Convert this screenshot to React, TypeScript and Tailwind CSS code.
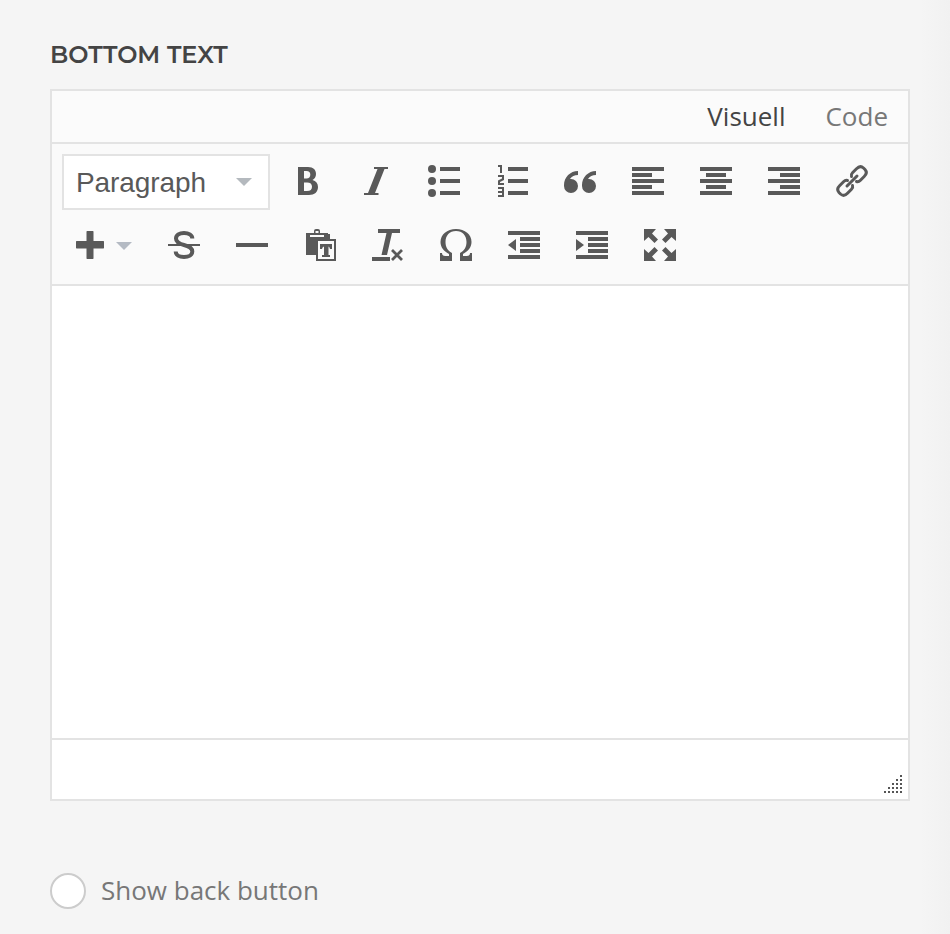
import React from "react";

function Icon({ children, className = "" }: { children: React.ReactNode; className?: string }) {
  return (
    <button className={`flex h-16 w-[68px] items-center justify-center text-[#595959] ${className}`}>
      <svg width="32" height="32" viewBox="0 0 32 32" fill="currentColor" className="overflow-visible">
        {children}
      </svg>
    </button>
  );
}

function Caret({ className }: { className: string }) {
  return (
    <svg width="16" height="8" viewBox="0 0 16 8" className={className} fill="currentColor">
      <path d="M0 0H16L8 8Z" />
    </svg>
  );
}

const RESIZE_ROWS = [1, 2, 3, 4, 5];

export default function App() {
  return (
    <main className="h-[934px] w-[950px] overflow-hidden bg-[linear-gradient(to_right,#f5f5f5_920px,#f1f1f1_950px)] pl-[50px] pt-10 font-['Open_Sans','Noto_Sans',sans-serif]">
      <h2 className="h-[49px] pt-px font-['Montserrat','Inter',sans-serif] text-[24px] font-semibold leading-7 text-[#444444]">
        BOTTOM TEXT
      </h2>

      <section className="flex h-[712px] w-[860px] flex-col border-2 border-[#e3e3e3] bg-white">
        <div className="flex h-[53px] items-center justify-end gap-10 border-b-2 border-[#e3e3e3] bg-[#fbfbfb] pr-5 text-[26px]">
          <button className="text-[#444444]">Visuell</button>
          <button className="text-[#777777]">Code</button>
        </div>

        <div className="h-[142px] border-b-2 border-[#e3e3e3] bg-[#fafafa] pt-[5px]">
          <div className="flex h-16 items-center">
            <button className="ml-2.5 mr-1 mt-0.5 flex h-14 w-52 items-center justify-between border-2 border-[#e3e3e3] bg-white pl-3 pr-4 font-['Liberation_Sans',Arial,sans-serif] text-[28px] tracking-[-0.1px] text-[#595959]">
              <span className="pt-0.5">Paragraph</span>
              <Caret className="text-[#b4b9be]" />
            </button>
            <Icon>
              <path fillRule="evenodd" d="M6 2H16C21.5 2 24 5 24 9C24 12 22.5 14 20.5 15C24 16 26 18.500 26 22C26 27 22.500 30 17 30H6ZM12 6V13.500H14.500C17 13.500 18.300 12 18.300 9.700C18.300 7.300 17 6 14.500 6ZM12 17.500V26H15C18.500 26 20 24.500 20 21.700C20 19 18.300 17.500 15 17.500Z" />
            </Icon>
            <Icon>
              <path d="M14 2H28V4H24.500L15 28H18.500V30H4V28H8L17.500 4H14Z" />
            </Icon>
            <Icon>
              <circle cx="4" cy="4" r="4" />
              <circle cx="4" cy="16" r="4" />
              <circle cx="4" cy="28" r="4" />
              <path d="M12 2H32V6H12ZM12 14H32V18H12ZM12 26H32V30H12Z" />
            </Icon>
            <Icon>
              <path d="M12 2H32V6H12ZM12 14H32V18H12ZM12 26H32V30H12Z" />
              <path d="M2 0H6V8H4V2H2ZM2 10H8V15L4 17V18H8V20H2V15.500L6 13.500V12H2ZM2 22H8V32H2V30H6V28H2V26H6V24H2Z" />
            </Icon>
            <Icon>
              <path d="M7 14A7 7 0 1 1 0 21V20C0 12.300 6.300 6 14 6V10C10.500 10 7.700 11.500 6 14.100ZM25 14A7 7 0 1 1 18 21V20C18 12.300 24.300 6 32 6V10C28.500 10 25.700 11.500 24 14.100Z" />
            </Icon>
            <Icon>
              <path d="M0 2H32V6H0ZM0 8H20V12H0ZM0 14H32V18H0ZM0 20H20V24H0ZM0 26H32V30H0Z" />
            </Icon>
            <Icon>
              <path d="M0 2H32V6H0ZM6 8H26V12H6ZM0 14H32V18H0ZM6 20H26V24H6ZM0 26H32V30H0Z" />
            </Icon>
            <Icon>
              <path d="M0 2H32V6H0ZM12 8H32V12H12ZM0 14H32V18H0ZM12 20H32V24H12ZM0 26H32V30H0Z" />
            </Icon>
            <Icon>
              <g fill="none" stroke="currentColor" strokeWidth="3" strokeLinecap="round">
                <path d="M11 21L21 11" />
                <path d="M15.500 11.500C15 10 15.300 9 16.500 7.800L20.500 3.800C23 1.200 25.500 1.200 27.500 3L29 4.500C30.800 6.500 30.800 9 28.200 11.500L24.200 15.500C23 16.700 22 17 20.500 16.500" />
                <path d="M11.500 15.500C10 15 9 15.300 7.800 16.500L3.800 20.500C1.200 23 1.200 25.500 3 27.500L4.500 29C6.500 30.800 9 30.800 11.500 28.200L15.500 24.200C16.700 23 17 22 16.500 20.500" />
              </g>
            </Icon>
          </div>

          <div className="flex h-16 items-center">
            <button className="flex h-16 w-[98px] items-center gap-3 pl-6 text-[#595959]">
              <svg width="28" height="28" viewBox="0 0 28 28" fill="currentColor">
                <path d="M11 0H17L17.500 .5V10H27.500L28 10.500V17L27.500 17.500H17.500V27.500L17 28H11L10.500 27.500V17.500H.5L0 17V10.500L.5 10H10.500V.5Z" />
              </svg>
              <Caret className="mt-0.5 text-[#b4bac3]" />
            </button>
            <Icon>
              <path d="M0 15H32V17H0Z" />
              <path fill="none" stroke="currentColor" strokeWidth="4" d="M24.300 9.500C24.300 6 20.600 4 16 4C11.400 4 8 6.200 8 9.500C8 13.300 11.500 14.800 16 16C20.800 17.200 24.300 18.700 24.300 22.500C24.300 26 20.600 28 16 28C11.400 28 7.700 26 7.700 22.500" />
            </Icon>
            <Icon>
              <path d="M0 14H32V18H0Z" />
            </Icon>
            <Icon>
              <path fillRule="evenodd" d="M2 4H10V2Q10 0 12 0H14Q16 0 16 2V4H24V5H26V10H12V26H2ZM11.500 2V4H14.500V2ZM6 6V8H20V6Z" />
              <path fillRule="evenodd" d="M12 10H32V32H12ZM14 12V30H30V12Z" />
              <path d="M16 15H28V20H26Q25.500 17.500 24.500 17.500V26H26V28H18V26H20V17.500Q18.500 17.500 18 20H16Z" />
            </Icon>
            <Icon>
              <path d="M6 0H28V4H20L15 26H9.500L14.500 4H6ZM0 28H18V32H0Z" />
              <path fill="none" stroke="currentColor" strokeWidth="2.800" d="M20 21L30 31M30 21L20 31" />
            </Icon>
            <Icon>
              <path d="M0 24H2Q2 27 5 27H9V25C3.500 22 .5 18 .5 13C.5 5.500 7 0 16 0C25 0 31.500 5.500 31.500 13C31.500 18 28.500 22 23 25V27H27Q30 27 30 24H32V32H20V24C24.500 21.500 26.500 18 26.500 13C26.500 6.500 22.500 2 16 2C9.500 2 5.500 6.500 5.500 13C5.500 18 7.500 21.500 12 24V32H0Z" />
            </Icon>
            <Icon>
              <path d="M0 2H32V6H0ZM12 8H32V12H12ZM12 14H32V18H12ZM12 20H32V24H12ZM0 26H32V30H0ZM8 10V22L0 16Z" />
            </Icon>
            <Icon>
              <path d="M0 2H32V6H0ZM12 8H32V12H12ZM12 14H32V18H12ZM12 20H32V24H12ZM0 26H32V30H0ZM0 10L8 16L0 22Z" />
            </Icon>
            <Icon>
              <path d="M0 0H12L8 4.500L14 10.500L10.500 14L4.500 8L0 12ZM32 0V12L27.500 8L21.500 14L18 10.500L24 4.500L20 0ZM0 32V20L4.500 24L10.500 18L14 21.500L8 27.500L12 32ZM32 32H20L24 27.500L18 21.500L21.500 18L27.500 24L32 20Z" />
            </Icon>
          </div>
        </div>

        <div className="flex-1 bg-white" />

        <footer className="flex h-[61px] items-end justify-end border-t-2 border-[#e3e3e3] pb-1.5 pr-1.5">
          <div className="flex flex-col items-end gap-0.5">
            {RESIZE_ROWS.map((count) => (
              <div key={count} className="flex gap-0.5">
                {Array.from({ length: count }, (_, i) => (
                  <i key={i} className="size-0.5 bg-[#555555]" />
                ))}
              </div>
            ))}
          </div>
        </footer>
      </section>

      <label className="mt-[72px] flex h-9 items-center text-[26px] text-[#777777]">
        <span className="mr-[15px] size-9 rounded-full border-2 border-[#cccccc] bg-white" />
        <span className="pb-0.5">Show back button</span>
      </label>
    </main>
  );
}
